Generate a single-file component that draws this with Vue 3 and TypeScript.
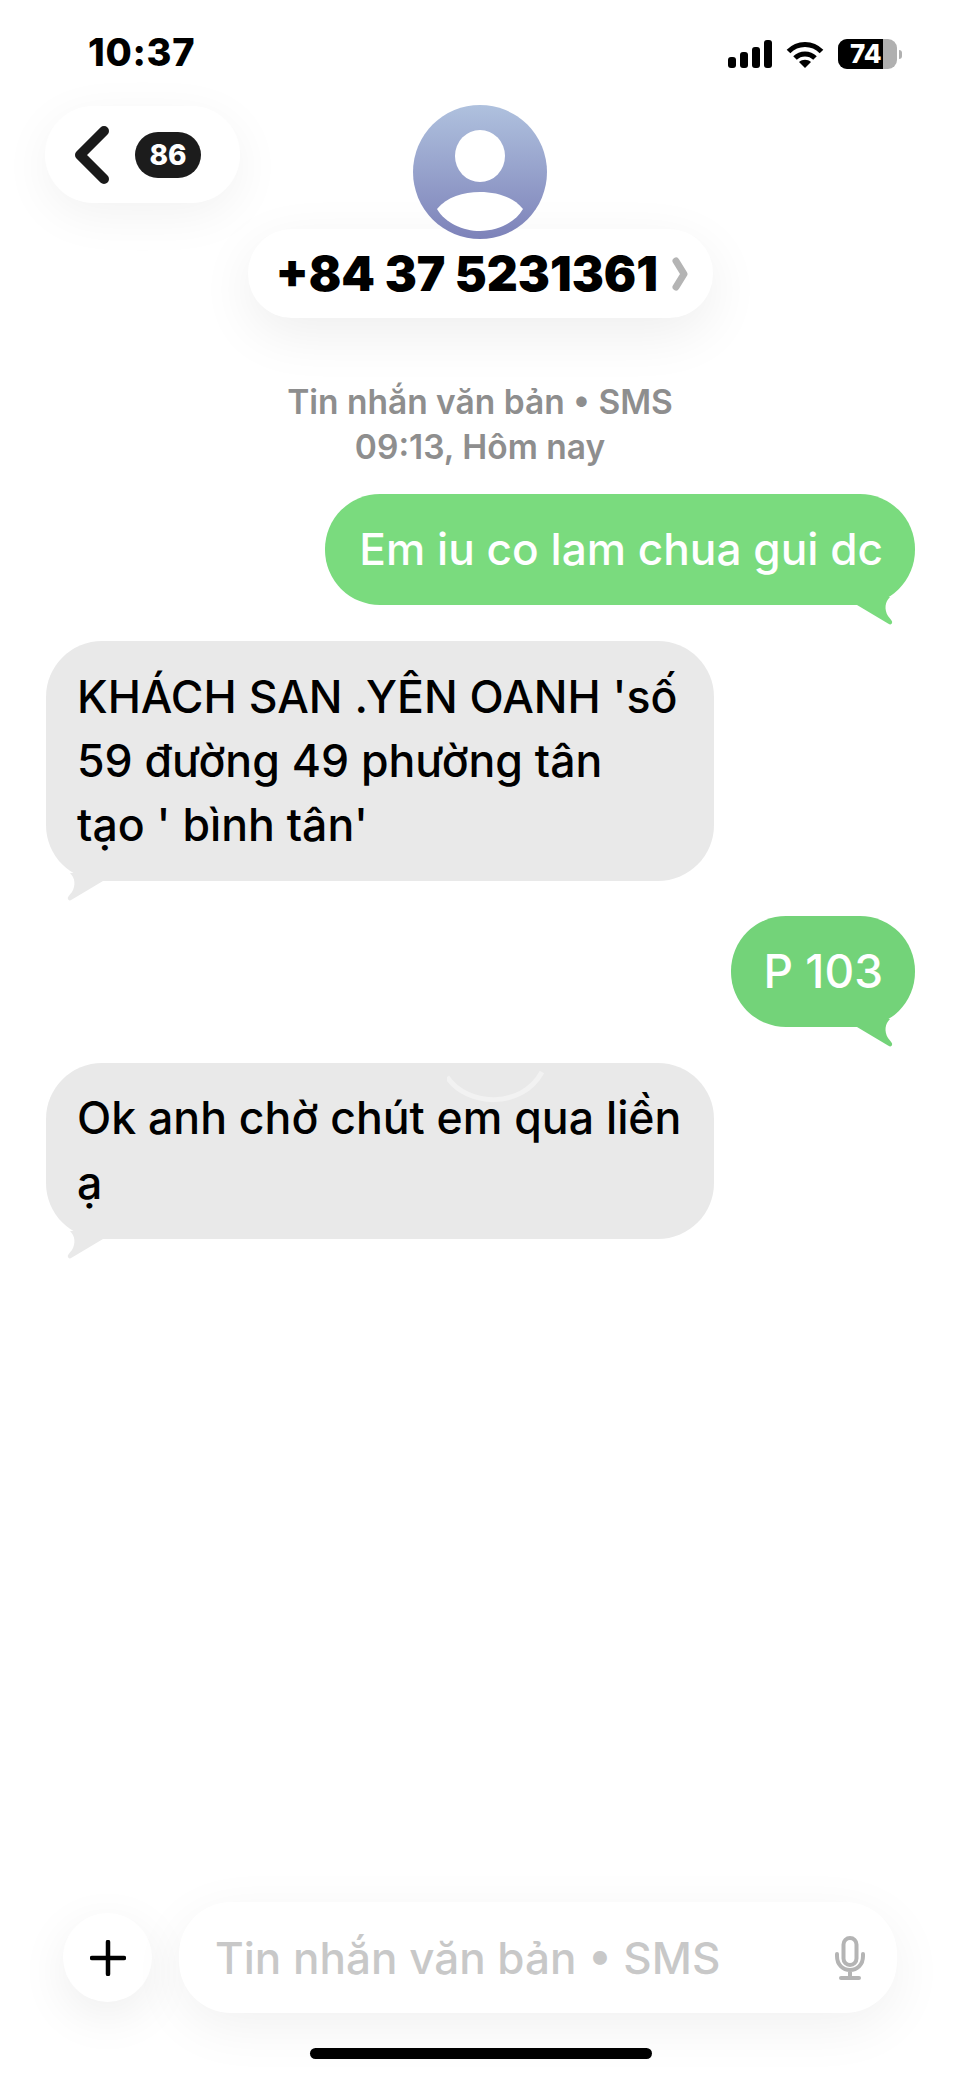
<script setup lang="ts">
interface Message {
  id: number
  side: 'sent' | 'received'
  lines: string[]
}
const messages: Message[] = [
  { id: 1, side: 'sent', lines: ['Em iu co lam chua gui dc'] },
  { id: 2, side: 'received', lines: ["KHÁCH SAN .YÊN OANH 'số", '59 đường 49 phường tân', "tạo ' bình tân'"] },
  { id: 3, side: 'sent', lines: ['P 103'] },
  { id: 4, side: 'received', lines: ['Ok anh chờ chút em qua liền', 'ạ'] },
]
</script>

<template>
  <div class="phone">
    <div class="status">
      <span class="time">10:37</span>
      <div class="status-icons">
        <div class="signal"><i class="b1"></i><i class="b2"></i><i class="b3"></i><i class="b4"></i></div>
        <svg class="wifi" width="38" height="28" viewBox="0 0 37 28" fill="none" stroke="#000" stroke-width="5">
          <path d="M2 11.5C11 2 26 2 35 11.5" />
          <path d="M8.5 18C14 12.5 23 12.5 28.5 18" />
          <path d="M18.5 28L12.5 22C16 19 21 19 24.5 22Z" fill="#000" stroke="none" />
        </svg>
        <div class="battery"><div class="battery-fill"></div><span>74</span></div>
        <div class="nub"></div>
      </div>
    </div>

    <div class="nav">
      <div class="back">
        <svg width="36" height="58" viewBox="0 0 36 58" fill="none" stroke="#1a1a1a" stroke-width="10" stroke-linecap="round" stroke-linejoin="round">
          <path d="M30 5L6 29L30 53" />
        </svg>
        <span class="badge">86</span>
      </div>
      <div class="contact">
        <div class="avatar">
          <svg width="134" height="134" viewBox="0 0 134 134">
            <ellipse cx="67" cy="51" rx="25" ry="26" fill="#fff" />
            <path d="M24 104C34 92 50 87 67 87C84 87 100 92 110 104C102 118 84 126 67 126C50 126 32 118 24 104Z" fill="#fff" />
          </svg>
        </div>
        <div class="name">
          <span>+84 37 5231361</span>
          <svg width="18" height="34" viewBox="0 0 18 34" fill="none" stroke="#b4b4b4" stroke-width="7" stroke-linecap="round" stroke-linejoin="round">
            <path d="M5 4L13 17L5 30" />
          </svg>
        </div>
      </div>
    </div>

    <div class="meta">
      <div>Tin nhắn văn bản • SMS</div>
      <div>09:13, Hôm nay</div>
    </div>

    <div class="thread">
      <div v-for="m in messages" :key="m.id" class="bubble" :class="[m.side, 'm' + m.id]">
        <svg v-if="m.id === 4" class="mark" width="100" height="42" viewBox="0 0 100 42" fill="none" stroke="#fff" stroke-opacity="0.4" stroke-width="5">
          <path d="M0 12C20 42 75 44 95 7" />
        </svg>
        <div v-for="l in m.lines" :key="l" class="line">{{ l }}</div>
        <svg class="tail" width="40" height="28" viewBox="0 0 40 28">
          <path d="M2 8L2 0L35 0C30 5 29 12 33 19C35 22 38 24 37 26C36 28 35 27.5 33 26.5L2 8Z" />
        </svg>
      </div>
    </div>

    <div class="composer">
      <div class="plus">
        <svg width="36" height="36" viewBox="0 0 36 36" fill="none" stroke="#000" stroke-width="4.5" stroke-linecap="round">
          <path d="M18 2V34M2 18H34" />
        </svg>
      </div>
      <div class="input">
        <span>Tin nhắn văn bản • SMS</span>
        <svg width="30" height="44" viewBox="0 0 30 44" fill="none" stroke="#b4b4b4" stroke-width="4" stroke-linecap="round">
          <rect x="8.5" y="2" width="13" height="27" rx="6.5" />
          <path d="M2 18V20C2 29 8 34 15 34C22 34 28 29 28 20V18M15 34V42M6 42H24" />
        </svg>
      </div>
    </div>
    <div class="home"></div>
  </div>
</template>

<style>
html, body { margin: 0; background: #fff; }
</style>

<style scoped>
.phone {
  width: 960px;
  height: 2077px;
  display: flex;
  flex-direction: column;
  overflow: hidden;
  background: #fff;
  color: #000;
  font-family: Inter, "Noto Sans", "Liberation Sans", sans-serif;
}
.status {
  height: 70px;
  padding: 0 58px 0 88px;
  display: flex;
  justify-content: space-between;
  align-items: flex-end;
  box-sizing: border-box;
}
.time {
  font-size: 38px;
  font-weight: 800;
  line-height: 36px;
  letter-spacing: 0.7px;
}
.status-icons {
  display: flex;
  align-items: center;
  height: 30px;
  margin-bottom: 1px;
}
.signal {
  display: flex;
  align-items: flex-end;
  gap: 4px;
  height: 28px;
  margin-right: 14px;
}
.signal i {
  display: block;
  width: 8px;
  border-radius: 3px;
  background: #000;
}
.b1 { height: 11px; }
.b2 { height: 16px; }
.b3 { height: 21px; }
.b4 { height: 28px; }
.wifi { margin-right: 14px; }
.battery {
  position: relative;
  width: 59px;
  height: 30px;
  border-radius: 9px;
  background: #b0b0b0;
  overflow: hidden;
}
.battery-fill {
  width: 45px;
  height: 30px;
  background: #000;
}
.battery span {
  position: absolute;
  left: 12px;
  top: 0;
  line-height: 30px;
  font-size: 26px;
  font-weight: 800;
  color: #fff;
}
.nub {
  width: 3px;
  height: 9px;
  margin-left: 2px;
  border-radius: 0 3px 3px 0;
  background: #b0b0b0;
}
.nav {
  display: grid;
  grid-template-columns: 1fr auto 1fr;
  padding: 35px 46px 0 46px;
}
.back {
  justify-self: start;
  align-self: start;
  width: 195px;
  height: 97px;
  margin-top: 1px;
  margin-left: -1px;
  box-sizing: border-box;
  padding-left: 29px;
  display: flex;
  align-items: center;
  gap: 25px;
  border-radius: 48px;
  background: #fff;
  box-shadow: 0 12px 50px rgba(0, 0, 0, 0.055);
}
.badge {
  width: 66px;
  height: 46px;
  border-radius: 23px;
  background: #1c1c1c;
  color: #fff;
  font-size: 28px;
  font-weight: 800;
  display: flex;
  align-items: center;
  justify-content: center;
}
.contact {
  display: flex;
  flex-direction: column;
  align-items: center;
}
.avatar {
  position: relative;
  z-index: 1;
  width: 134px;
  height: 134px;
  margin-bottom: -10px;
  border-radius: 50%;
  background: linear-gradient(180deg, #afc1de 0%, #7d82b9 100%);
}
.avatar svg { display: block; }
.name {
  width: 465px;
  height: 89px;
  box-sizing: border-box;
  padding: 0 0 0 28px;
  display: flex;
  align-items: center;
  gap: 13px;
  border-radius: 44px;
  background: #fff;
  box-shadow: 0 16px 55px rgba(0, 0, 0, 0.07);
  font-size: 48px;
  font-weight: 900;
  white-space: nowrap;
}
.meta {
  margin-top: 62px;
  text-align: center;
  color: #8e8e8e;
  font-size: 33.5px;
  font-weight: 600;
  line-height: 45px;
}
.thread {
  margin-top: 24px;
  padding: 0 45px 0 46px;
  display: flex;
  flex-direction: column;
}
.bubble {
  position: relative;
  box-sizing: border-box;
  font-size: 44.6px;
  font-weight: 500;
  white-space: nowrap;
}
.sent {
  align-self: flex-end;
  padding: 23px 32px 23px 34px;
  font-size: 44.2px;
  line-height: 65px;
  border-radius: 55px;
  background: #7adb7e;
  color: #fff;
}
.received {
  align-self: flex-start;
  width: 668px;
  padding: 24px 31px;
  border-radius: 56px;
  background: #e9e9e9;
  color: #000;
  line-height: 64px;
}
.m2 { margin-top: 36px; }
.m3 {
  margin-top: 35px;
  padding: 23px 32px 23px 33px;
  font-size: 46px;
  background: #73d379;
}
.m4 {
  margin-top: 36px;
  padding: 23px 31px;
  line-height: 65px;
}
.tail {
  position: absolute;
  bottom: -20px;
  right: 20px;
}
.sent .tail { fill: #7adb7e; }
.m3 .tail { fill: #73d379; }
.received .tail {
  fill: #e9e9e9;
  left: 19px;
  right: auto;
  transform: scaleX(-1);
}
.mark {
  position: absolute;
  left: 401px;
  top: 2px;
}
.composer {
  margin-top: auto;
  padding: 0 63px 0 63px;
  display: flex;
  align-items: center;
  gap: 27px;
}
.plus {
  width: 89px;
  height: 89px;
  flex: none;
  border-radius: 50%;
  background: #fff;
  box-shadow: 0 14px 50px rgba(0, 0, 0, 0.07);
  display: flex;
  align-items: center;
  justify-content: center;
}
.input {
  flex: 1;
  height: 111px;
  box-sizing: border-box;
  padding: 0 32px 0 36px;
  display: flex;
  align-items: center;
  justify-content: space-between;
  border-radius: 52px;
  background: #fff;
  box-shadow: 0 14px 55px rgba(0, 0, 0, 0.06);
  color: #c8c8c8;
  font-size: 44px;
  font-weight: 500;
}
.home {
  align-self: center;
  width: 342px;
  height: 11px;
  margin: 35px 0 18px 2px;
  border-radius: 6px;
  background: #000;
}
</style>
